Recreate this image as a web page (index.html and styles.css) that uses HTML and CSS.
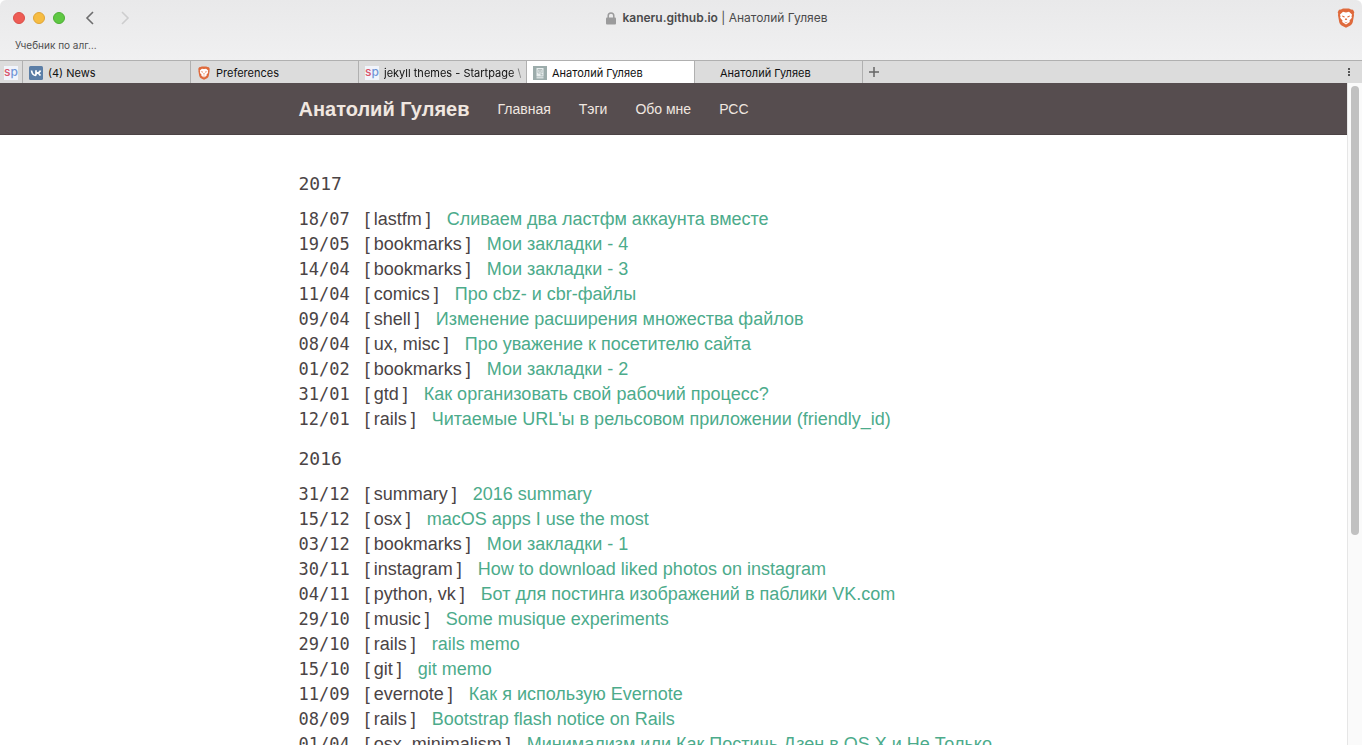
FILE: index.html
```html
<!DOCTYPE html>
<html lang="ru">
<head>
<meta charset="utf-8">
<title>Анатолий Гуляев</title>
<link rel="stylesheet" href="styles.css">
</head>
<body>
<svg class="defs" aria-hidden="true">
  <symbol id="lion" viewBox="0 0 18 20">
    <path fill="#df6a3c" d="M4 1.500 6 .6h6l2 .9 2 .2 1.300 2.500-.5 1.500.2 1.600-1.200 6.600c-.3 1.600-1.200 2.700-2.400 3.500L9 19.800l-4.400-2.400c-1.200-.8-2.100-1.900-2.400-3.500L1 7.300l.2-1.600L.7 4.200 2 1.700z"/>
    <path fill="#fff" d="M6 3.800 9 4.400l3-.6 3 2.700-.5 2 .4 1.200-2.400 2.700.3 1.600L9 16.400 5.200 14l.3-1.600-2.400-2.700.4-1.200-.5-2z"/>
    <path fill="#df6a3c" d="m4.800 7.400 2.700.8.200 1.200-2-.3zM13.200 7.400l-2.700.8-.2 1.200 2-.3zM8.700 10.300h.6l1 1.100L9 12.300l-1.300-.9zM7 13.600l2 .8 2-.8-2 1.600z"/>
  </symbol>
</svg>
<header class="browser">
  <div class="toolbar">
    <div class="window-buttons">
      <button class="dot dot-close" aria-label="Close"></button>
      <button class="dot dot-min" aria-label="Minimize"></button>
      <button class="dot dot-max" aria-label="Zoom"></button>
    </div>
    <div class="history">
      <button class="icon-btn" aria-label="Back"><svg width="10" height="14" viewBox="0 0 10 14"><path d="M8 1 2 7l6 6" fill="none" stroke="#6d6d6e" stroke-width="1.600"/></svg></button>
      <button class="icon-btn" aria-label="Forward"><svg width="10" height="14" viewBox="0 0 10 14"><path d="m2 1 6 6-6 6" fill="none" stroke="#cdcdce" stroke-width="1.600"/></svg></button>
    </div>
    <div class="address">
      <svg width="10" height="13" viewBox="0 0 10 13"><path d="M2.200 6V3.700a2.800 2.800 0 0 1 5.600 0V6" fill="none" stroke="#9b9b9c" stroke-width="1.500"/><rect y="5.500" width="10" height="7" rx="1" fill="#9b9b9c"/></svg>
      <span><b>kaneru.github.io</b> | Анатолий Гуляев</span>
    </div>
    <button class="icon-btn shields" aria-label="Brave"><svg width="18" height="20"><use href="#lion"/></svg></button>
  </div>
  <nav class="bookmarks"><a href="#">Учебник по алг…</a></nav>
  <div class="tabs">
    <button class="tab tab-pinned" aria-label="Startpage"><span class="sp"><span class="sp-s">s</span><span class="sp-p">p</span></span></button>
    <button class="tab"><svg width="14" height="14" viewBox="0 0 14 14"><rect width="14" height="14" rx="1.500" fill="#5b7ea6"/><path d="M2.500 4.500c.5 3.500 2 5 4.500 5M7 4.300v5.200M11.500 4.500C11 6 9.800 7 7.500 7c2 0 3 .8 4 2.500" fill="none" stroke="#fff" stroke-width="1.700"/></svg><span class="tab-label">(4) News</span></button>
    <button class="tab"><svg width="14" height="14" viewBox="0 0 14 14"><use href="#lion" width="14" height="14"/></svg><span class="tab-label">Preferences</span></button>
    <button class="tab"><span class="sp"><span class="sp-s">s</span><span class="sp-p">p</span></span><span class="tab-label tab-fade">jekyll themes - Startpage \</span></button>
    <button class="tab tab-active"><svg width="14" height="14" viewBox="0 0 14 14"><rect width="14" height="14" fill="#9cacab"/><path d="M3.500 2h7v8.500h-7z" fill="#e9eeee"/><path d="M5 3.500h4V7H5z" fill="none" stroke="#b4c0bf"/><path d="M6 5h2M7.500 8.800h2" stroke="#9aa8a7"/><path d="M3.500 11h7v1.500h-7z" fill="#d5dddd"/></svg><span class="tab-label">Анатолий Гуляев</span></button>
    <button class="tab tab-plain"><span class="tab-label">Анатолий Гуляев</span></button>
    <button class="icon-btn new-tab" aria-label="New tab"><svg width="10" height="10" viewBox="0 0 10 10"><path d="M5 0v10M0 5h10" stroke="#666" stroke-width="1.500"/></svg></button>
    <button class="icon-btn menu" aria-label="Menu"><svg width="2" height="8" viewBox="0 0 2 8"><path d="M0 0h2v2H0zM0 3h2v2H0zM0 6h2v2H0z" fill="#555"/></svg></button>
  </div>
</header>
<div class="viewport">
  <div class="page">
    <div class="masthead">
      <nav class="wrap site-nav">
        <a class="site-title" href="#">Анатолий Гуляев</a>
        <a href="#">Главная</a>
        <a href="#">Тэги</a>
        <a href="#">Обо мне</a>
        <a href="#">РСС</a>
      </nav>
    </div>
    <main class="wrap archive">
      <h2>2017</h2>
      <ul>
        <li><time>18/07</time><span class="tag"><i>[</i>lastfm<i>]</i></span><a href="#">Сливаем два ластфм аккаунта вместе</a></li>
        <li><time>19/05</time><span class="tag"><i>[</i>bookmarks<i>]</i></span><a href="#">Мои закладки - 4</a></li>
        <li><time>14/04</time><span class="tag"><i>[</i>bookmarks<i>]</i></span><a href="#">Мои закладки - 3</a></li>
        <li><time>11/04</time><span class="tag"><i>[</i>comics<i>]</i></span><a href="#">Про cbz- и cbr-файлы</a></li>
        <li><time>09/04</time><span class="tag"><i>[</i>shell<i>]</i></span><a href="#">Изменение расширения множества файлов</a></li>
        <li><time>08/04</time><span class="tag"><i>[</i>ux, misc<i>]</i></span><a href="#">Про уважение к посетителю сайта</a></li>
        <li><time>01/02</time><span class="tag"><i>[</i>bookmarks<i>]</i></span><a href="#">Мои закладки - 2</a></li>
        <li><time>31/01</time><span class="tag"><i>[</i>gtd<i>]</i></span><a href="#">Как организовать свой рабочий процесс?</a></li>
        <li><time>12/01</time><span class="tag"><i>[</i>rails<i>]</i></span><a href="#">Читаемые URL'ы в рельсовом приложении (friendly_id)</a></li>
      </ul>
      <h2>2016</h2>
      <ul>
        <li><time>31/12</time><span class="tag"><i>[</i>summary<i>]</i></span><a href="#">2016 summary</a></li>
        <li><time>15/12</time><span class="tag"><i>[</i>osx<i>]</i></span><a href="#">macOS apps I use the most</a></li>
        <li><time>03/12</time><span class="tag"><i>[</i>bookmarks<i>]</i></span><a href="#">Мои закладки - 1</a></li>
        <li><time>30/11</time><span class="tag"><i>[</i>instagram<i>]</i></span><a href="#">How to download liked photos on instagram</a></li>
        <li><time>04/11</time><span class="tag"><i>[</i>python, vk<i>]</i></span><a href="#">Бот для постинга изображений в паблики VK.com</a></li>
        <li><time>29/10</time><span class="tag"><i>[</i>music<i>]</i></span><a href="#">Some musique experiments</a></li>
        <li><time>29/10</time><span class="tag"><i>[</i>rails<i>]</i></span><a href="#">rails memo</a></li>
        <li><time>15/10</time><span class="tag"><i>[</i>git<i>]</i></span><a href="#">git memo</a></li>
        <li><time>11/09</time><span class="tag"><i>[</i>evernote<i>]</i></span><a href="#">Как я использую Evernote</a></li>
        <li><time>08/09</time><span class="tag"><i>[</i>rails<i>]</i></span><a href="#">Bootstrap flash notice on Rails</a></li>
        <li><time>01/04</time><span class="tag"><i>[</i>osx, minimalism<i>]</i></span><a href="#">Минимализм или Как Постичь Дзен в OS X и Не Только</a></li>
      </ul>
    </main>
  </div>
  <div class="scrollbar"><div class="thumb"></div></div>
</div>
</body>
</html>
```
FILE: styles.css
```css
* { box-sizing: border-box; }
body {
  margin: 0;
  height: 100vh;
  display: flex;
  flex-direction: column;
  overflow: hidden;
  background: #fff;
  font-family: "Liberation Sans", Arial, sans-serif;
}
a { text-decoration: none; color: inherit; }
button { border: 0; padding: 0; background: none; font: inherit; color: inherit; }
svg { display: block; flex: none; }
.defs { position: absolute; width: 0; height: 0; }

.browser {
  flex: none;
  background: linear-gradient(#e9e9ea, #f0f0f1 60px);
  border-radius: 6px 6px 0 0;
  font-family: Inter, "Open Sans", sans-serif;
  font-size: 11px;
}
.toolbar {
  display: grid;
  grid-template-columns: auto 1fr auto;
  align-items: center;
  height: 36px;
  padding: 0 7px 0 13px;
}
.window-buttons { display: flex; gap: 8px; grid-area: 1 / 1; }
.dot { width: 12px; height: 12px; border-radius: 50%; }
.dot-close { background: #ee5c55; border: 1px solid #d94f49; }
.dot-min { background: #f6bc42; border: 1px solid #dfa538; }
.dot-max { background: #5fc843; border: 1px solid #4dae35; }
.icon-btn { display: flex; align-items: center; justify-content: center; }
.history { display: flex; gap: 25px; grid-area: 1 / 2; margin-left: 20px; }
.address {
  grid-area: 1 / 2;
  justify-self: center;
  display: flex;
  align-items: center;
  gap: 6px;
  padding-left: 32px;
  color: #4a4a4b;
  font-size: 12px;
  line-height: 14px;
}
.address b { font-weight: 600; }
.shields { grid-area: 1 / 3; }
.bookmarks {
  height: 24px;
  padding: 1px 15px;
  line-height: 16px;
  color: #4f4f50;
  font-size: 10px;
}
.tabs {
  display: flex;
  height: 23px;
  background: #dcdcdc;
  border-top: 1px solid #b0b0b0;
}
.tab {
  display: flex;
  align-items: center;
  gap: 5px;
  width: 168px;
  padding: 1px 6px 0 6px;
  border-right: 1px solid #b0b0b0;
  color: #111;
}
.tab-pinned { width: 23px; padding: 1px 4px 0; }
.tab-active { background: #fff; }
.tab-plain { padding-left: 25px; }
.tab-label { white-space: nowrap; }
.tab-fade { mask-image: linear-gradient(to right, #000 128px, transparent 142px); }
.sp {
  flex: none;
  display: flex;
  justify-content: center;
  width: 14px;
  height: 14px;
  background: #f1f4fb;
  font-size: 12px;
  font-weight: 500;
  line-height: 12px;
}
.sp-s { color: #d9566b; }
.sp-p { color: #6f94d6; }
.new-tab { width: 22px; }
.menu { margin-left: auto; padding: 0 12px 0 0; }

.viewport { flex: 1; min-height: 0; display: flex; }
.page { flex: 1; min-width: 0; overflow: hidden; }
.scrollbar {
  width: 15px;
  padding: 3px;
  background: #fafafa;
  border-left: 1px solid #e6e6e6;
}
.thumb { width: 8px; height: 68.5%; border-radius: 4px; background: #c1c1c1; }

.wrap { max-width: 750px; margin: 0 auto; }
.masthead { background: #564d4f; border-bottom: 1px solid #4c4345; }
.site-nav {
  display: flex;
  align-items: center;
  gap: 28px;
  height: 51px;
  line-height: 24px;
  color: #f0e7e0;
  font-size: 14px;
}
.site-title { font-size: 20px; font-weight: 700; }

.archive { padding-top: 36px; color: #4b4445; font-size: 18px; line-height: 25px; }
.archive h2 {
  margin: 0 0 11px;
  font-family: "DejaVu Sans Mono", monospace;
  font-size: 18px;
  font-weight: 400;
}
.archive ul { list-style: none; margin: 0 0 14px; padding: 0; }
.archive li { display: flex; align-items: baseline; gap: 15px; height: 25px; white-space: nowrap; }
.archive time { font-family: "DejaVu Sans Mono", monospace; font-size: 17px; }
.archive li a { color: #4cab8b; }
.tag { display: flex; gap: 4px; padding-right: 1px; }
.tag i { font-style: normal; }
```
